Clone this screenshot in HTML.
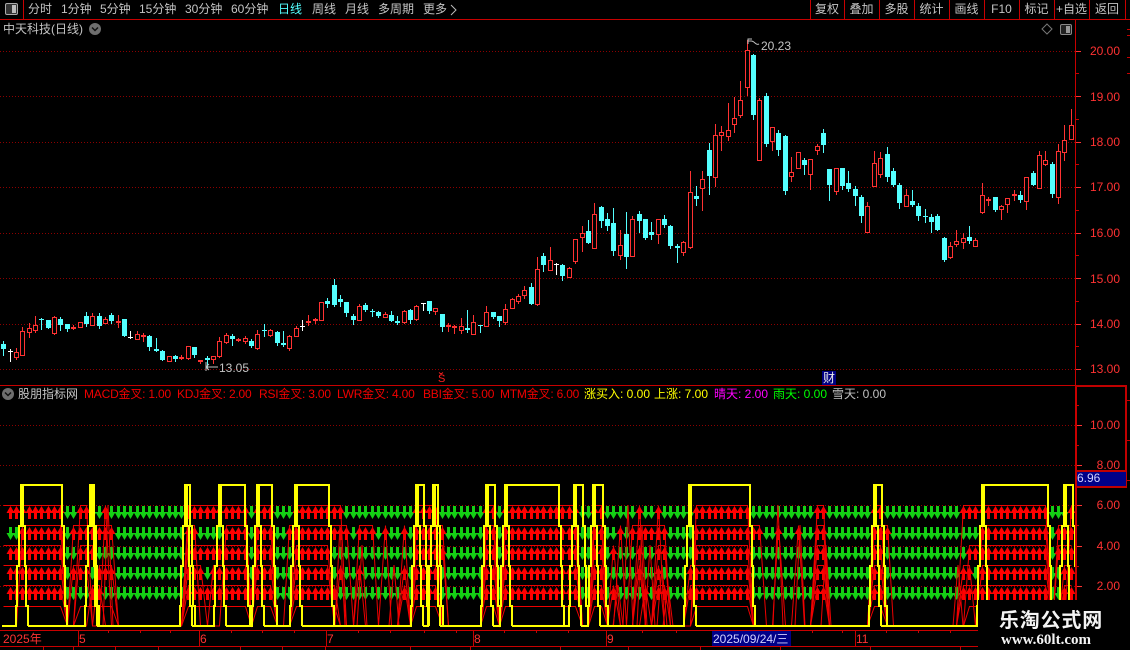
<!DOCTYPE html>
<html><head><meta charset="utf-8"><style>
html,body{margin:0;padding:0;background:#000;width:1130px;height:650px;overflow:hidden}
#r{position:relative;width:1130px;height:650px;overflow:hidden;font-family:"Liberation Sans","WenQuanYi Zen Hei","Noto Sans CJK SC",sans-serif;font-size:12px;color:#c4c4c4}
#r div.t{position:absolute;white-space:nowrap;line-height:14px;height:14px}
svg{position:absolute;left:0;top:0}
.c{text-align:center}
.ax{color:#ff3232;width:40px;text-align:right;left:1080px}
.d{color:#ff3232}
.n{letter-spacing:-.2px}
</style></head><body><div id="r">
<svg id="s" width="1130" height="650" viewBox="0 0 1130 650"></svg>

<div class="t" style="left:28px;top:2px">分时</div>
<div class="t" style="left:61px;top:2px">1分钟</div>
<div class="t" style="left:100px;top:2px">5分钟</div>
<div class="t" style="left:139px;top:2px">15分钟</div>
<div class="t" style="left:185px;top:2px">30分钟</div>
<div class="t" style="left:231px;top:2px">60分钟</div>
<div class="t" style="left:278px;top:2px;color:#54ffff">日线</div>
<div class="t" style="left:312px;top:2px">周线</div>
<div class="t" style="left:345px;top:2px">月线</div>
<div class="t" style="left:378px;top:2px">多周期</div>
<div class="t" style="left:423px;top:2px">更多</div>

<div class="t c" style="left:810px;width:34px;top:2px">复权</div>
<div class="t c" style="left:844px;width:35px;top:2px">叠加</div>
<div class="t c" style="left:879px;width:35px;top:2px">多股</div>
<div class="t c" style="left:914px;width:35px;top:2px">统计</div>
<div class="t c" style="left:949px;width:35px;top:2px">画线</div>
<div class="t c" style="left:984px;width:35px;top:2px">F10</div>
<div class="t c" style="left:1019px;width:35px;top:2px">标记</div>
<div class="t c" style="left:1054px;width:35px;top:2px">+自选</div>
<div class="t c" style="left:1089px;width:36px;top:2px">返回</div>

<div class="t" style="left:3px;top:22px">中天科技(日线)</div>

<div class="t ax" style="top:44px">20.00</div>
<div class="t ax" style="top:90px">19.00</div>
<div class="t ax" style="top:135px">18.00</div>
<div class="t ax" style="top:180px">17.00</div>
<div class="t ax" style="top:226px">16.00</div>
<div class="t ax" style="top:272px">15.00</div>
<div class="t ax" style="top:317px">14.00</div>
<div class="t ax" style="top:362px">13.00</div>

<div class="t" style="left:761px;top:39px">20.23</div>
<div class="t" style="left:219px;top:361px">13.05</div>
<div class="t" style="left:438px;top:372px;color:#ff2020;font-size:11px">S</div>
<div class="t c" style="left:822px;top:371px;width:14px;background:#000080;color:#e8e8e8">财</div>

<div class="t" style="left:18px;top:387px">股朋指标网</div>
<div class="t n" style="left:84px;top:387px;color:#f00000">MACD金叉: 1.00</div>
<div class="t n" style="left:177px;top:387px;color:#f00000">KDJ金叉: 2.00</div>
<div class="t n" style="left:259px;top:387px;color:#f00000">RSI金叉: 3.00</div>
<div class="t n" style="left:337px;top:387px;color:#f00000">LWR金叉: 4.00</div>
<div class="t n" style="left:423px;top:387px;color:#f00000">BBI金叉: 5.00</div>
<div class="t n" style="left:500px;top:387px;color:#f00000">MTM金叉: 6.00</div>
<div class="t" style="left:584px;top:387px;color:#ffff00">涨买入: 0.00</div>
<div class="t" style="left:654px;top:387px;color:#ffff00">上涨: 7.00</div>
<div class="t" style="left:714px;top:387px;color:#ff00ff">晴天: 2.00</div>
<div class="t" style="left:773px;top:387px;color:#00ff00">雨天: 0.00</div>
<div class="t" style="left:832px;top:387px;color:#c0c0c0">雪天: 0.00</div>

<div class="t ax" style="top:418px">10.00</div>
<div class="t ax" style="top:458px">8.00</div>
<div class="t ax" style="top:498px">6.00</div>
<div class="t ax" style="top:539px">4.00</div>
<div class="t ax" style="top:579px">2.00</div>
<div class="t" style="left:1077px;top:471px;color:#d0d0ff">6.96</div>

<div class="t d" style="left:3px;top:632px">2025年</div>
<div class="t d" style="left:79px;top:632px">5</div>
<div class="t d" style="left:200px;top:632px">6</div>
<div class="t d" style="left:327px;top:632px">7</div>
<div class="t d" style="left:474px;top:632px">8</div>
<div class="t d" style="left:607px;top:632px">9</div>
<div class="t" style="left:713px;top:632px;color:#d0d0ff">2025/09/24/三</div>
<div class="t d" style="left:856px;top:632px">11</div>

<div id="w" style="position:absolute;left:978px;top:600px;width:152px;height:50px;background:#000">
 <div style="position:absolute;left:21px;top:7px;white-space:nowrap;font:bold 20px/24px 'Noto Sans CJK SC',sans-serif;color:#f4f4f4;letter-spacing:.8px">乐淘公式网</div>
 <div style="position:absolute;left:23px;top:32px;white-space:nowrap;font:bold 15px/16px 'Liberation Serif',serif;color:#f4f4f4">www.60lt.com</div>
</div>
</div>
<script>
var C=[
['c',341,344,349,355],['w',349,351,352,361],['r',348,352,357,359],['r',327,331,355,355],['r',323,328,332,337],['r',316,325,330,332],['c',318,319,320,329],['c',320,320,328,328],['r',316,317,333,334],['c',317,319,325,330],
['c',324,324,329,331],['r',325,327,329,329],['r',322,322,327,327],['c',312,316,324,326],['r',313,316,325,325],['c',313,316,326,328],['r',317,319,323,323],['c',313,315,321,323],['r',315,321,322,327],['c',319,319,336,336],
['w',331,337,338,338],['r',331,334,339,339],['r',333,335,336,341],['c',335,336,347,350],['c',338,349,351,351],['c',350,351,360,360],['r',356,356,361,361],['c',355,356,359,361],['r',355,357,359,359],['r',346,346,358,359],
['c',347,347,355,357],['r',360,360,362,363],['c',356,358,360,368],['r',356,356,359,363],['r',337,341,356,357],['r',333,335,342,343],['c',334,336,339,345],['r',338,339,340,341],['r',336,338,341,343],['c',339,341,346,347],
['r',330,334,348,349],['c',324,330,331,336],['r',329,330,335,336],['c',331,332,343,345],['c',331,343,345,346],['r',335,336,348,350],['r',326,328,336,336],['w',320,326,327,330],['r',315,321,323,325],['r',318,319,321,323],
['r',302,302,320,320],['c',298,301,304,307],['c',279,285,305,306],['c',295,299,302,306],['c',302,302,313,316],['c',314,316,320,324],['r',304,306,320,320],['c',303,305,310,311],['c',309,311,312,316],['c',311,312,316,317],
['r',312,314,317,317],['c',311,315,321,321],['c',316,321,323,324],['r',310,311,322,323],['c',309,310,320,323],['r',305,306,319,320],['w',303,303,304,310],['c',301,301,311,313],['r',308,308,311,314],['c',314,314,327,331],
['r',323,325,327,331],['r',325,326,328,333],['r',318,326,330,333],['c',310,328,330,332],['r',315,322,334,334],['c',325,325,326,332],['r',306,312,326,326],['c',312,312,317,318],['c',316,316,321,326],['r',304,309,322,324],
['r',298,299,308,308],['r',294,296,301,303],['r',286,290,295,298],['c',283,287,304,304],['r',257,269,304,305],['c',253,256,265,271],['r',247,260,270,270],['w',263,264,265,274],['c',264,265,276,280],['r',267,268,277,277],
['r',239,239,261,263],['r',226,233,237,251],['c',220,231,243,243],['r',203,214,248,248],['c',206,207,221,227],['c',213,219,226,230],['c',208,223,251,255],['r',230,245,255,259],['c',212,234,257,268],['r',216,219,256,256],
['c',211,214,221,232],['c',219,219,238,239],['c',222,232,235,239],['r',219,219,234,243],['c',215,219,225,227],['c',225,226,246,248],['c',244,246,248,262],['r',241,242,252,255],['r',171,192,247,248],['c',186,196,199,205],
['r',171,179,188,210],['c',143,150,176,194],['r',124,135,177,186],['r',126,132,135,150],['r',103,130,136,140],['r',97,118,124,132],['r',81,100,115,117],['r',40,50,87,95],['c',54,55,115,119],['r',98,100,160,160],
['c',93,96,144,146],['r',127,127,141,150],['c',130,133,150,155],['c',135,136,191,194],['r',157,172,176,181],['r',152,152,168,168],['c',158,160,165,174],['r',159,159,174,189],['r',144,146,150,154],['c',129,133,145,152],
['c',169,169,185,200],['r',168,168,191,194],['c',168,168,186,189],['c',171,183,189,191],['c',186,189,196,205],['c',195,197,216,222],['r',202,206,232,232],['r',151,163,186,186],['r',152,158,174,177],['c',147,154,177,181],
['c',168,171,185,186],['c',183,185,203,208],['r',189,195,206,206],['c',190,201,205,206],['c',203,206,216,220],['c',209,216,217,222],['c',214,217,222,232],['c',214,216,230,230],['c',237,238,260,261],['r',242,246,257,258],
['r',230,241,244,246],['r',233,238,242,248],['c',226,237,241,243],['r',238,240,246,246],['r',183,195,212,213],['r',197,199,201,205],['c',197,197,210,211],['r',205,206,209,219],['r',198,198,204,212],['r',190,194,196,200],
['c',191,195,200,202],['r',177,177,201,209],['c',171,173,185,185],['r',151,155,188,188],['r',151,160,164,165],['c',162,164,194,197],['r',144,151,197,203],['r',125,140,152,160],['r',109,125,139,139]
];
var W={r:'#ff3232',c:'#54ffff',w:'#ffffff'},o=[];
function X(i){return Math.round(3.3+6.354*i)}
function rc(x,y,w,h,f){o.push('<rect x="'+x+'" y="'+y+'" width="'+w+'" height="'+h+'" fill="'+f+'"/>')}
function ln(a,b,c,d,s,e){o.push('<line x1="'+a+'" y1="'+b+'" x2="'+c+'" y2="'+d+'" stroke="'+s+'" '+(e||'')+'/>')}
var RED='#c80000',DIM='#8c0000';
[51,96,142,187,233,278,324,369].forEach(function(y){ln(0,y+.5,1075,y+.5,DIM,'stroke-dasharray="1 2"');rc(1076,y,5,1,'#ff3232')});
[425,465,505,546,586].forEach(function(y){ln(0,y+.5,1075,y+.5,DIM,'stroke-dasharray="1 2"');rc(1077,y,5,1,'#ff3232')});
[73,119,164,210,255,301,346,405,445,485,525,566].forEach(function(y){rc(1076,y,3,1,RED)});
C.forEach(function(c,i){var x=X(i),f=W[c[0]],h=c[1],t=c[2],b=c[3],l=c[4];
 rc(x,h,1,l-h+1,f);
 if(c[0]=='r'){ if(b-t<=2){rc(x-2,t,5,2,f)} else {rc(x-2,t,5,b-t+1,f);rc(x-1,t+1,3,b-t-1,'#000');} }
 else if(b-t<=2){rc(x-2,t,5,Math.max(1,b-t),f)}
 else rc(x-2,t,5,b-t,f);
});
o.push('<path d="M206 367H218M206 367l3-3M206 367l3 3M206 362v9" stroke="#c0c0c0" fill="none"/>');
o.push('<path d="M748 44v-5h4M748 41h3q2 0 4 2t4 1" stroke="#c0c0c0" fill="none"/>');
o.push('<path d="M439 372.5l2 1.5l2-1.5" stroke="#ff2020" fill="none"/>');
var R=[
[[0,62],[80,90],[104,108],[186,247],[255,272],[293,345],[413,440],[484,497],[505,572],[575,582],[592,604],[636,642],[655,661],[692,748],[815,828],[872,886],[960,1047],[1065,1075]],
[[20,62],[73,118],[186,196],[222,250],[256,272],[287,350],[357,377],[382,388],[400,408],[415,445],[484,497],[505,572],[575,582],[592,604],[620,625],[632,667],[692,760],[773,779],[798,804],[815,828],[872,890],[980,1048],[1058,1075]],
[[0,66],[78,93],[185,202],[205,248],[257,272],[295,328],[415,445],[484,497],[505,572],[575,582],[592,604],[612,620],[638,644],[658,667],[692,748],[815,828],[872,886],[967,1048],[1058,1075]],
[[0,63],[70,90],[93,117],[185,205],[210,247],[257,272],[292,328],[335,343],[357,363],[400,407],[413,440],[484,497],[505,572],[575,582],[592,604],[633,640],[658,664],[690,748],[815,828],[872,886],[960,970],[980,1050],[1060,1075]],
[[0,63],[90,100],[186,273],[292,337],[400,406],[413,440],[484,497],[505,572],[575,582],[592,604],[612,618],[640,646],[658,667],[687,748],[815,828],[872,886],[957,1048],[1062,1075]],
[[0,62],[78,118],[186,246],[256,272],[295,337],[415,440],[484,497],[505,572],[575,582],[592,604],[692,750],[872,886],[965,1048],[1062,1075]]
];
var TOP=[506,527,547,567,587],LV=[505,525,545,565,585,606];
function isR(r,x){return R[r].some(function(a){return x>=a[0]&&x<=a[1]})}
var ru='',gd='';
for(var r=0;r<5;r++){for(var i=1;i<=168;i++){var x=X(i)+.5,y=TOP[r];
 if(isR(r,x)) ru+='M'+x+' '+y+'l4 7h-2.5v6h-3v-6h-2.5z';
 else gd+='M'+(x-1.5)+' '+y+'h3v6h2.5l-4 7l-4-7h2.5z';
}}
o.push('<path d="'+gd+'" fill="#14cf14"/><path d="'+ru+'" fill="#ff0000"/>');
for(var r=0;r<6;r++){var p=[];for(var i=0;i<=168;i++){var x=X(i)+.5;p.push(x+','+(isR(r,x)?LV[r]+.5:626))}
 o.push('<polyline points="'+p.join(' ')+'" fill="none" stroke="#ee0000" stroke-width="1"/>')}
var sp=[108,340,362,394,618,628,642,650,662,668,778,800,826,958];
sp.forEach(function(x,k){var t=LV[k%5];o.push('<polyline points="'+(x-5)+',626 '+x+','+t+' '+(x+5)+',626" fill="none" stroke="#ee0000"/>')});
var Y=[[22,61],[91,93],[186,189],[220,244],[258,271],[296,328],[417,423],[434,437],[487,494],[506,558],[575,582],[594,602],[690,749],[875,881],[983,1047],[1065,1072]];
var pEnd=2,ys='';
function up(a){return [a-6,626,a-6,606,a-5,606,a-5,566,a-3,566,a-3,526,a-1,526,a-1,485,a,485]}
function dn(b){return [b,485,b+1,485,b+1,526,b+3,526,b+3,566,b+4,566,b+4,606,b+6,606,b+6,626]}
Y.forEach(function(a,k){var s=a[0],e=a[1];
 var pts=[pEnd,626].concat(up(s)).concat([e,485]).concat(dn(e));
 ys+='<polyline points="'+pts.join(' ')+'"/>';
 ys+='<polyline points="'+dn(s).join(' ')+'"/>';
 pEnd=s+6;
});
ys+='<polyline points="'+pEnd+',626 978,626"/>';
o.push('<g fill="none" stroke="#ffff00" stroke-width="2">'+ys+'</g>');
rc(0,19,1130,1,RED);
rc(23,0,1,19,RED);
[810,844,879,914,949,984,1019,1054,1089,1125].forEach(function(x){rc(x,0,1,19,RED)});
rc(1075,19,1,366,RED);
rc(0,385,1075,1,RED);
rc(1075,385,2,245,RED);rc(1075,385,51,2,'#c00000');rc(1125,385,2,102,'#c00000');
rc(1077,471,49,16,'#000088');rc(1077,470,50,2,'#c00000');rc(1077,486,50,2,'#c00000');
[29,35,57,73,400,440,480].forEach(function(y){rc(1127,y,3,1,RED)});
rc(0,630,1130,1,RED);rc(0,646,1130,1,RED);
[78,199,326,473,606,855].forEach(function(x){rc(x,630,1,16,RED)});
[108,140,170,231,262,294,358,390,424,456,504,536,568,642,676,812,842,886,918,950].forEach(function(x){rc(x,631,1,2,RED)});
[43,73,115,158,240,282,325,410,470,560,628,700,780,870,960].forEach(function(x){rc(x,647,1,3,RED)});
rc(712,631,79,15,'#000088');
o.push('<rect x="5.5" y="3.5" width="12" height="11" rx="1.5" fill="#333" stroke="#aaa"/><rect x="12" y="5" width="4" height="8" fill="#bbb"/>');
o.push('<path d="M451 5l5 5l-5 5" fill="none" stroke="#bbb"/>');
o.push('<circle cx="95" cy="29" r="6" fill="#6e6e6e"/><path d="M92 27.5l3 3l3-3" fill="none" stroke="#111" stroke-width="1.5"/>');
o.push('<circle cx="8" cy="394" r="6" fill="#6e6e6e"/><path d="M5 392.5l3 3l3-3" fill="none" stroke="#111" stroke-width="1.5"/>');
o.push('<path d="M1047 24l5 5l-5 5l-5-5z" fill="none" stroke="#777"/>');
o.push('<rect x="1060.5" y="24.5" width="11" height="10" rx="1.5" fill="#222" stroke="#888"/><rect x="1066" y="26" width="4" height="7" fill="#999"/>');
document.getElementById('s').innerHTML=o.join('');
</script>
</body></html>
